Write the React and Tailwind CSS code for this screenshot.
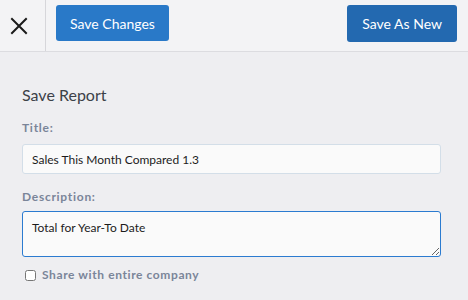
export default function App() {
  return (
    <div className="w-[468px] h-[300px] bg-[#eeeef1] font-['Lato','Open_Sans',sans-serif] overflow-hidden">
      {/* Toolbar */}
      <div className="h-[52px] bg-[#f3f3f5] border-b border-[#dcdce0] flex items-stretch">
        <div className="w-[46px] border-r border-[#d6d6da] flex items-center justify-center">
          <svg width="18" height="18" viewBox="0 0 18 18" className="-ml-[8px]">
            <path d="M2 2 L16 16 M16 2 L2 16" stroke="#1a1a1a" strokeWidth="2" strokeLinecap="square" />
          </svg>
        </div>
        <div className="flex-1 flex items-start justify-between pl-[10px] pr-[11px] pt-[5px]">
          <button className="h-[36px] px-[14px] rounded-[3px] bg-[#2979c8] text-white text-[14px]">
            Save Changes
          </button>
          <button className="h-[37px] px-[15px] rounded-[3px] bg-[#2369b0] text-white text-[14px]">
            Save As New
          </button>
        </div>
      </div>

      {/* Form */}
      <div className="pl-[22px] pr-[27px] pt-[33px]">
        <div className="text-[16px] text-[#3c4148] leading-[20px]">Save Report</div>
        <div className="mt-[16px] text-[12px] font-bold tracking-[0.06em] text-[#7a8599] leading-[14px]">Title:</div>
        <input
          readOnly
          value="Sales This Month Compared 1.3"
          className="mt-[9px] w-full h-[30px] px-[9px] rounded-[3px] border border-[#d3dee8] bg-[#fafafa] text-[12px] text-[#1c1c1c] outline-none"
        />
        <div className="mt-[16px] text-[12px] font-bold tracking-[0.06em] text-[#7a8599] leading-[14px]">Description:</div>
        <textarea
          readOnly
          value="Total for Year-To Date"
          className="mt-[7px] block w-full h-[46px] px-[9px] py-[7px] rounded-[3px] border border-[#2b7bd0] bg-[#fafafa] text-[12px] text-[#1c1c1c] outline-none resize-y"
        />
        <label className="mt-[9px] flex items-center gap-[6px] pl-[3px]">
          <input type="checkbox" className="w-[11px] h-[11px] m-0" />
          <span className="text-[12px] font-bold tracking-[0.05em] text-[#7a8599]">Share with entire company</span>
        </label>
      </div>
    </div>
  );
}
